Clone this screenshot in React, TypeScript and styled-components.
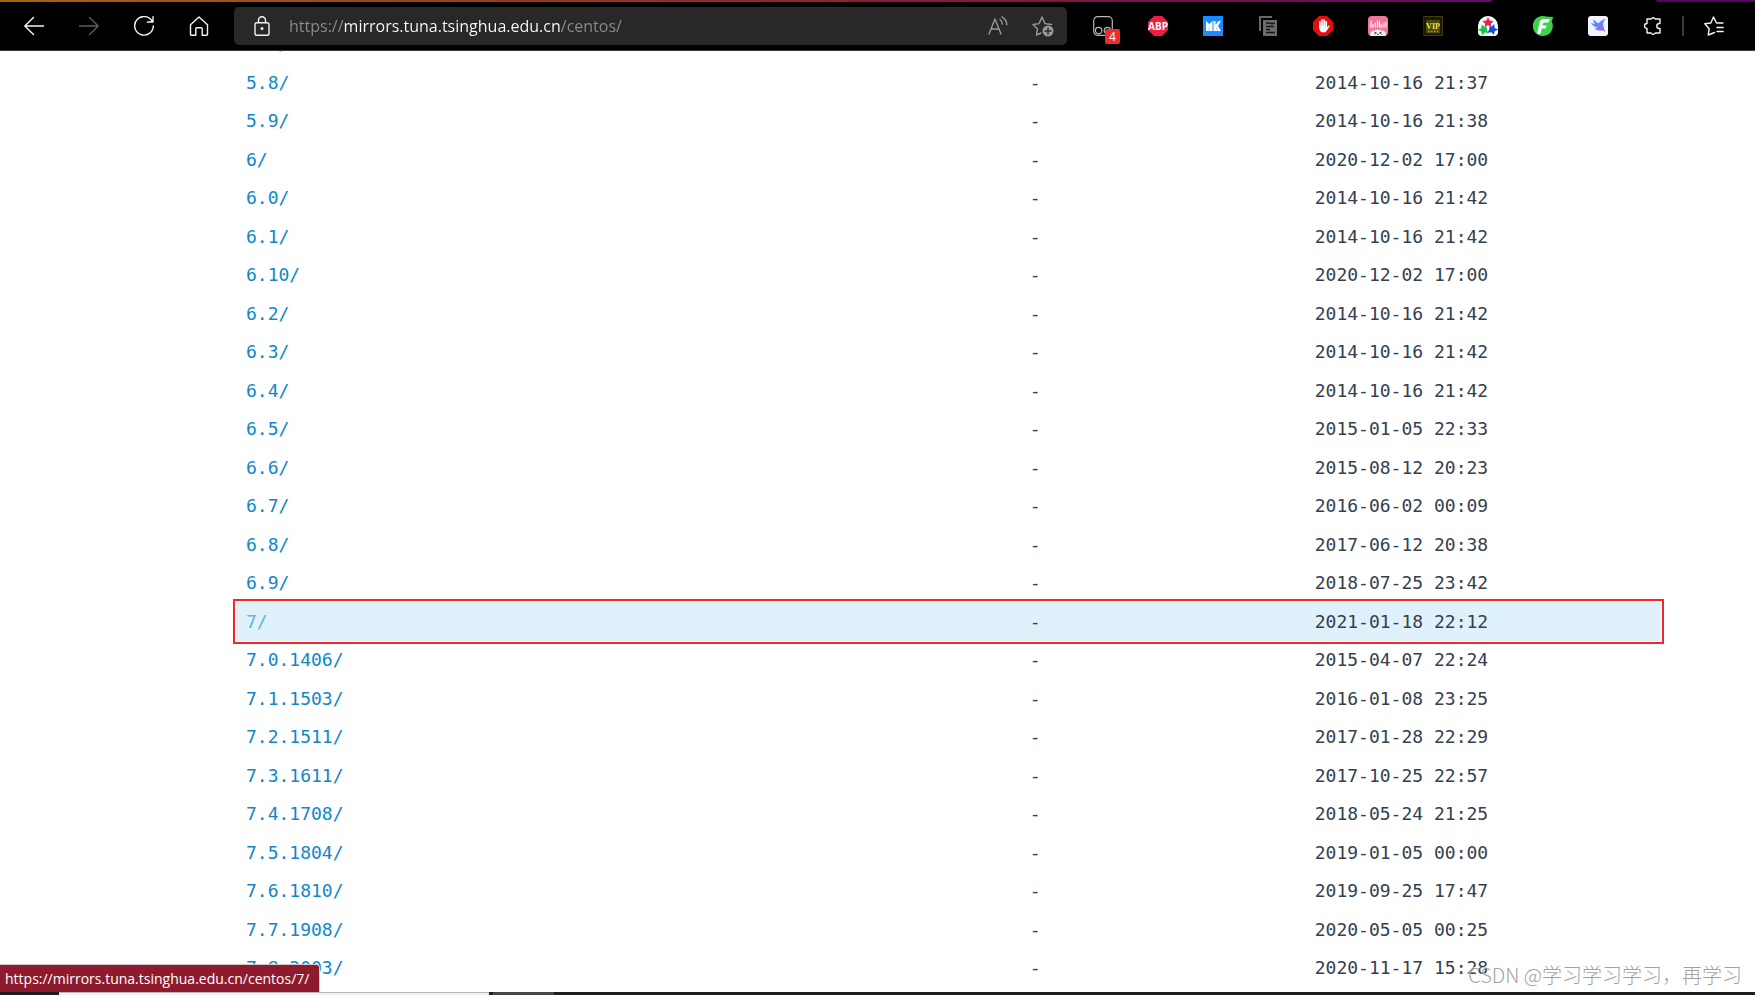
import React from "react";
import styled, { createGlobalStyle } from "styled-components";

const GlobalStyle = createGlobalStyle`
  * { box-sizing: border-box; }
  html, body, #root { height: 100%; }
  body { margin: 0; background: #fff; overflow: hidden; }
`;

const uiFont = `"Open Sans", "Noto Sans", sans-serif`;

const Window = styled.div`
  height: 100vh;
  display: flex;
  flex-direction: column;
`;

const TabEdge = styled.div`
  height: 2px;
  flex: none;
  display: flex;
  justify-content: space-between;
  background: #000;
`;

const ActiveEdge = styled.span`
  width: 85%;
  border-bottom-right-radius: 4px;
  background: linear-gradient(90deg, #a8640c, #983c20 32%, #8e1c38 60%, #780e50 80%, #68086a);
`;

const RestEdge = styled.span`
  width: 99px;
  border-bottom-left-radius: 4px;
  background: #560560;
`;

const Toolbar = styled.header`
  flex: none;
  height: 49px;
  display: flex;
  align-items: center;
  padding: 0 14px 0 6px;
  background: #000;
  border-bottom: 1px solid #3c3c3c;
`;

const ToolButton = styled.button<{ $dim?: boolean }>`
  width: 55px;
  height: 38px;
  flex: none;
  display: grid;
  place-items: center;
  padding: 0;
  border: 0;
  background: none;
  color: ${(p) => (p.$dim ? "#5c5c5c" : "#f4f4f4")};

  svg { display: block; grid-area: 1 / 1; }
`;

const AddressBar = styled.form`
  flex: 1;
  min-width: 0;
  height: 38px;
  display: flex;
  align-items: center;
  margin: 0 8px;
  padding-right: 2px;
  border-radius: 5px;
  background: #292728;
`;

const FieldButton = styled(ToolButton)`
  width: 45px;
  color: #9a9a9a;
`;

const SiteButton = styled(ToolButton)`
  color: #f4f4f4;
`;

const AddressInput = styled.input`
  flex: 1;
  min-width: 0;
  height: 36px;
  padding: 0;
  border: 0;
  outline: 0;
  font: 16px/24px ${uiFont};
  color: #fff;
  -webkit-text-fill-color: transparent;
  background: linear-gradient(90deg, #8c8c8c 55px, #fff 55px, #fff 272px, #8c8c8c 272px);
  background-clip: text;
  -webkit-background-clip: text;
`;

const Badge = styled.span`
  grid-area: 1 / 1;
  position: relative;
  left: 10px;
  top: 10px;
  width: 15px;
  height: 15px;
  border-radius: 2px;
  background: #ee2b2f;
  color: #fff;
  font: 12px/15px ${uiFont};
  text-align: center;
`;

const Divider = styled.span`
  width: 2px;
  height: 20px;
  flex: none;
  margin: 0 2px;
  background: #3a3a3a;
`;

const Page = styled.main`
  flex: 1;
  min-height: 0;
  position: relative;
  overflow: hidden;
  padding: 0 94px 0 236px;
`;

const Listing = styled.table`
  width: 100%;
  margin-top: -26px;
  table-layout: fixed;
  border-collapse: collapse;
  font: 18px/26px "DejaVu Sans Mono", monospace;
  color: #34404e;
`;

const Row = styled.tr<{ $hovered: boolean }>`
  height: 38px;
  background: ${(p) => (p.$hovered ? "#dff1fb" : "transparent")};
  outline: ${(p) => (p.$hovered ? "2px solid #fb2424" : "none")};
  outline-offset: 1px;

  &:nth-child(even) { height: 39px; }
`;

const Cell = styled.td<{ $width: string }>`
  width: ${(p) => p.$width};
  padding: 0 10px;
  white-space: nowrap;
`;

const EntryLink = styled.a<{ $hovered: boolean }>`
  color: ${(p) => (p.$hovered ? "#5fb4e4" : "#0f87c9")};
  text-decoration: none;
`;

const StatusBubble = styled.div`
  position: absolute;
  left: 0;
  bottom: 0;
  height: 28px;
  padding: 0 10px 0 5px;
  border-top: 1px solid #d0c8ca;
  border-right: 1px solid #d0c8ca;
  border-top-right-radius: 4px;
  background: #8e1a2e;
  color: #fff;
  font: 14px/27px ${uiFont};
`;

const Watermark = styled.div`
  position: absolute;
  right: 13px;
  bottom: 2px;
  font: 20px/30px "Noto Sans CJK SC", sans-serif;
  font-weight: 300;
  color: rgba(150, 150, 150, 0.9);
  text-shadow: -1px -1px 0 rgba(255, 255, 255, 0.7);
`;

const Taskbar = styled.footer`
  height: 3px;
  flex: none;
  display: flex;
  background: #1c2022;
`;

const TaskSearch = styled.span`
  width: 430px;
  margin: 0 4px 0 59px;
  border-top: 1px solid #b8b8b8;
  background: #f0f0f0;
`;

const TaskItem = styled.span`
  width: 61px;
  background: #46484c;
`;

type IconProps = { children: React.ReactNode; size?: number; fill?: string };
const Icon = ({ children, size = 20, fill = "none" }: IconProps) => (
  <svg width={size} height={size} viewBox={`0 0 ${size} ${size}`} fill={fill} stroke="currentColor" strokeWidth="1.4" strokeLinecap="round" strokeLinejoin="round" aria-hidden="true">
    {children}
  </svg>
);

const octagon = "M6 0h8l6 6v8l-6 6H6l-6-6V6z";
const star = "M0-5.6 1.7-2 5.6-1.6 2.8 1.2 3.5 5 0 3.2-3.5 5-2.8 1.2-5.6-1.6-1.7-2z";

const extensions: { name: string; art: React.ReactNode; badge?: string }[] = [
  {
    name: "Tampermonkey",
    badge: "4",
    art: (
      <Icon>
        <g stroke="#b8b8b8" strokeWidth="1.2">
          <rect x="0.7" y="0.7" width="18.6" height="18.6" rx="4" />
          <circle cx="5.6" cy="14.6" r="3.2" />
          <circle cx="14.4" cy="14.6" r="3.2" />
        </g>
      </Icon>
    ),
  },
  {
    name: "Adblock Plus",
    art: (
      <Icon>
        <path d={octagon} fill="#ed1e45" stroke="none" />
        <text x="10" y="14" textAnchor="middle" fill="#fff" stroke="none" fontFamily="Open Sans, sans-serif" fontWeight="700" fontSize="10">ABP</text>
      </Icon>
    ),
  },
  {
    name: "MK",
    art: (
      <Icon>
        <rect width="20" height="20" fill="#1a8cff" stroke="none" />
        <path d="M3 5l3.2 3L9.500 5v10H3zM10.500 5h2v4l3-4H18l-3 5 3 5h-7.500z" fill="#fff" stroke="none" />
        <path d="M6.200 11v4M13 11l1.500 4" stroke="#8cc5ff" strokeWidth="0.8" />
      </Icon>
    ),
  },
  {
    name: "Page copier",
    art: (
      <Icon>
        <path d="M2 15V1h12" stroke="#686868" strokeWidth="2" strokeLinecap="butt" strokeLinejoin="miter" />
        <rect x="5" y="4" width="14" height="16" fill="#6c6c6c" stroke="none" />
        <path d="M8 7h4M12 7.500h5M8 10.500h8M8 13.500h4M8 16.500h9" stroke="#151515" strokeWidth="1.400" strokeLinecap="butt" />
      </Icon>
    ),
  },
  {
    name: "AdBlock",
    art: (
      <Icon>
        <path d={octagon} fill="#e90c0c" stroke="none" />
        <path d="M7 11V5.800M9 9.500V3.800M11.200 9.500V4M13.200 10.500V5.800" stroke="#fff" strokeWidth="1.700" />
        <path d="M6.200 9.500h7.800v1.500l1.500-1.300c.8-.4 1.300.2.9.9l-3 4.600c-1.200 1.600-4.700 1.600-6 0-1-1.200-1.200-3-1.200-5.700z" fill="#fff" stroke="none" />
      </Icon>
    ),
  },
  {
    name: "Bilibili helper",
    art: (
      <Icon>
        <rect width="20" height="20" rx="4" fill="#f4769b" stroke="none" />
        <path d="M3 5v6h2.500V9H3M7.500 7v4M9.500 5v6M11.500 5v6h2.500V9h-2.500M16 7v4M18 6v5" stroke="#ffe8ef" strokeWidth="1.200" />
        <path d="M2.500 20c-1-3 .8-5.500 3-5.300 2-1.300 7-1.300 9 0 2.200-.2 4 2.300 3 5.300z" fill="#f1f1fa" stroke="none" />
        <path d="M6.500 16l2 1-2 1M13.500 16l-2 1 2 1M9.500 18.500h1" stroke="#444a60" strokeWidth="0.900" />
      </Icon>
    ),
  },
  {
    name: "VIP video",
    art: (
      <Icon>
        <rect x="0.500" y="0.500" width="19" height="19" fill="#1c1b02" stroke="#3f3d0a" strokeWidth="1" />
        <rect x="3" y="4" width="14" height="13" fill="#4b480a" stroke="none" />
        <text x="10" y="13" textAnchor="middle" fill="#efe35a" stroke="none" fontFamily="Liberation Serif, serif" fontWeight="700" fontSize="8">VIP</text>
        <path d="M5 15.500h10" stroke="#aaa12c" strokeWidth="1.300" strokeDasharray="1.500 1.500" strokeLinecap="butt" />
      </Icon>
    ),
  },
  {
    name: "Stars",
    art: (
      <Icon>
        <path d="M10 0a10 10 0 0 1 10 10v6a4 4 0 0 1-4 4H4a4 4 0 0 1-4-4v-6A10 10 0 0 1 10 0z" fill="#fff" stroke="none" />
        <g stroke="none">
          <path d={star} transform="translate(10 6.500)" fill="#f21f4b" />
          <path d={star} transform="translate(5.600 13.500) rotate(-20)" fill="#12c74f" />
          <path d={star} transform="translate(14.400 13.200) rotate(20)" fill="#1450d8" />
          <circle cx="10" cy="11" r="1.700" fill="#fff" />
        </g>
      </Icon>
    ),
  },
  {
    name: "FeHelper",
    art: (
      <Icon>
        <path d="M10 0c3 0 5 1 7 .8L20 1c-.2 2-.8 3-1.300 4.500A10 10 0 1 1 10 0z" fill="#3bd34c" stroke="none" />
        <path d="M17 3H11c-3 0-4 1.500-4.500 4L4 18h3.500l1.300-5.500h4l.8-3H9.500c.4-2.200.9-3 2.500-3h3.200z" fill="#fff" stroke="none" />
      </Icon>
    ),
  },
  {
    name: "Swift",
    art: (
      <Icon>
        <defs>
          <linearGradient id="bird" x1="0" y1="0" x2="1" y2="1">
            <stop offset="0" stopColor="#3c9cf4" />
            <stop offset="1" stopColor="#9a68f4" />
          </linearGradient>
        </defs>
        <rect width="20" height="20" rx="3" fill="#f0f2fd" stroke="none" />
        <path d="M5.500 3.200c1.500 1.800 3.200 3.300 5 4C12.500 5 14.800 3.500 18 2.500c-1.800 1.800-2.600 3.200-2.900 5 0 2.800.9 5.200 2.200 8.500-1.700-1.300-3.200-1.700-5-1.500-2.800 0-4.900-.9-5.800-2.300 1.400.3 2.400.1 3-.4C6.500 11 4 9.200 2.500 6.500c1.300 1 2.600 1.400 4.200 1.400C5.600 6.500 5.200 4.800 5.500 3.200z" fill="url(#bird)" stroke="none" />
      </Icon>
    ),
  },
];

const entries: [string, string][] = [
  ["5.7/", "2014-10-16 21:37"],
  ["5.8/", "2014-10-16 21:37"],
  ["5.9/", "2014-10-16 21:38"],
  ["6/", "2020-12-02 17:00"],
  ["6.0/", "2014-10-16 21:42"],
  ["6.1/", "2014-10-16 21:42"],
  ["6.10/", "2020-12-02 17:00"],
  ["6.2/", "2014-10-16 21:42"],
  ["6.3/", "2014-10-16 21:42"],
  ["6.4/", "2014-10-16 21:42"],
  ["6.5/", "2015-01-05 22:33"],
  ["6.6/", "2015-08-12 20:23"],
  ["6.7/", "2016-06-02 00:09"],
  ["6.8/", "2017-06-12 20:38"],
  ["6.9/", "2018-07-25 23:42"],
  ["7/", "2021-01-18 22:12"],
  ["7.0.1406/", "2015-04-07 22:24"],
  ["7.1.1503/", "2016-01-08 23:25"],
  ["7.2.1511/", "2017-01-28 22:29"],
  ["7.3.1611/", "2017-10-25 22:57"],
  ["7.4.1708/", "2018-05-24 21:25"],
  ["7.5.1804/", "2019-01-05 00:00"],
  ["7.6.1810/", "2019-09-25 17:47"],
  ["7.7.1908/", "2020-05-05 00:25"],
  ["7.8.2003/", "2020-11-17 15:28"],
];

const hoveredEntry = "7/";

export default function App() {
  return (
    <Window>
      <GlobalStyle />
      <TabEdge>
        <ActiveEdge />
        <RestEdge />
      </TabEdge>
      <Toolbar>
        <ToolButton aria-label="Back">
          <Icon><path d="M19.500 10H.8M9.500 1.500L.8 10l8.700 8.500" /></Icon>
        </ToolButton>
        <ToolButton $dim aria-label="Forward">
          <Icon><path d="M.5 10h18.700M10.500 1.500l8.700 8.500-8.700 8.500" /></Icon>
        </ToolButton>
        <ToolButton aria-label="Refresh">
          <Icon><path d="M18.500 6A9.300 9.300 0 1 0 19.300 10M19 .8V6h-5.500" /></Icon>
        </ToolButton>
        <ToolButton aria-label="Home">
          <Icon><path d="M1.500 8.800L10 .9l8.500 7.900v9.400a1 1 0 0 1-1 1h-4.300v-6.500a1 1 0 0 0-1-1H7.800a1 1 0 0 0-1 1v6.500H2.500a1 1 0 0 1-1-1z" /></Icon>
        </ToolButton>
        <AddressBar onSubmit={(e) => e.preventDefault()}>
          <SiteButton type="button" aria-label="Site information">
            <Icon>
              <rect x="3" y="6.700" width="14" height="12.500" rx="1.800" />
              <path d="M6.500 6.500V4.300a3.500 3.500 0 0 1 7 0v2.200" />
              <circle cx="10" cy="12.500" r="0.800" fill="currentColor" />
            </Icon>
          </SiteButton>
          <AddressInput aria-label="Address" defaultValue="https://mirrors.tuna.tsinghua.edu.cn/centos/" />
          <FieldButton type="button" aria-label="Read aloud">
            <Icon><path d="M1 18L7 3l6 15M3 13h8M12 3.500c1.500 1 2.300 2.500 2.300 4.500M14 .8c3 1.700 4.800 4.300 4.800 8" /></Icon>
          </FieldButton>
          <FieldButton type="button" aria-label="Add to favorites">
            <Icon size={22}>
              <path d="M9 18l-4.500 2 .9-6.200L1 9.500l6-.9L10 2l3 6.600 6.500.9" />
              <circle cx="16" cy="16" r="5.500" fill="#9a9a9a" stroke="none" />
              <path d="M16 13v6M13 16h6" stroke="#292728" />
            </Icon>
          </FieldButton>
        </AddressBar>
        {extensions.map((ext) => (
          <ToolButton key={ext.name} aria-label={ext.name}>
            {ext.art}
            {ext.badge && <Badge>{ext.badge}</Badge>}
          </ToolButton>
        ))}
        <ToolButton aria-label="Extensions">
          <Icon><path d="M4 3h4.200a2.200 2.200 0 0 1 4 0H17v4.500h-.7a2.500 2.500 0 1 0 0 5H17V17h-4.800a2.200 2.200 0 0 1-4 0H4v-4.500a2.500 2.500 0 0 1 0-5z" /></Icon>
        </ToolButton>
        <Divider />
        <ToolButton aria-label="Favorites">
          <Icon><path d="M10.500 16.500L4.200 19l1-6.200L.8 7.800l6-.8L9.500 1l3 6H19M13 11.500h6.200M13 15.500h6.200" /></Icon>
        </ToolButton>
      </Toolbar>
      <Page>
        <Listing>
          <tbody>
            {entries.map(([name, date]) => (
              <Row key={name} $hovered={name === hoveredEntry}>
                <Cell $width="55%">
                  <EntryLink href={`#${name}`} $hovered={name === hoveredEntry}>{name}</EntryLink>
                </Cell>
                <Cell $width="20%">-</Cell>
                <Cell $width="25%">{date}</Cell>
              </Row>
            ))}
          </tbody>
        </Listing>
        <StatusBubble>https://mirrors.tuna.tsinghua.edu.cn/centos/7/</StatusBubble>
        <Watermark>CSDN @学习学习学习，再学习</Watermark>
      </Page>
      <Taskbar>
        <TaskSearch />
        <TaskItem />
      </Taskbar>
    </Window>
  );
}
